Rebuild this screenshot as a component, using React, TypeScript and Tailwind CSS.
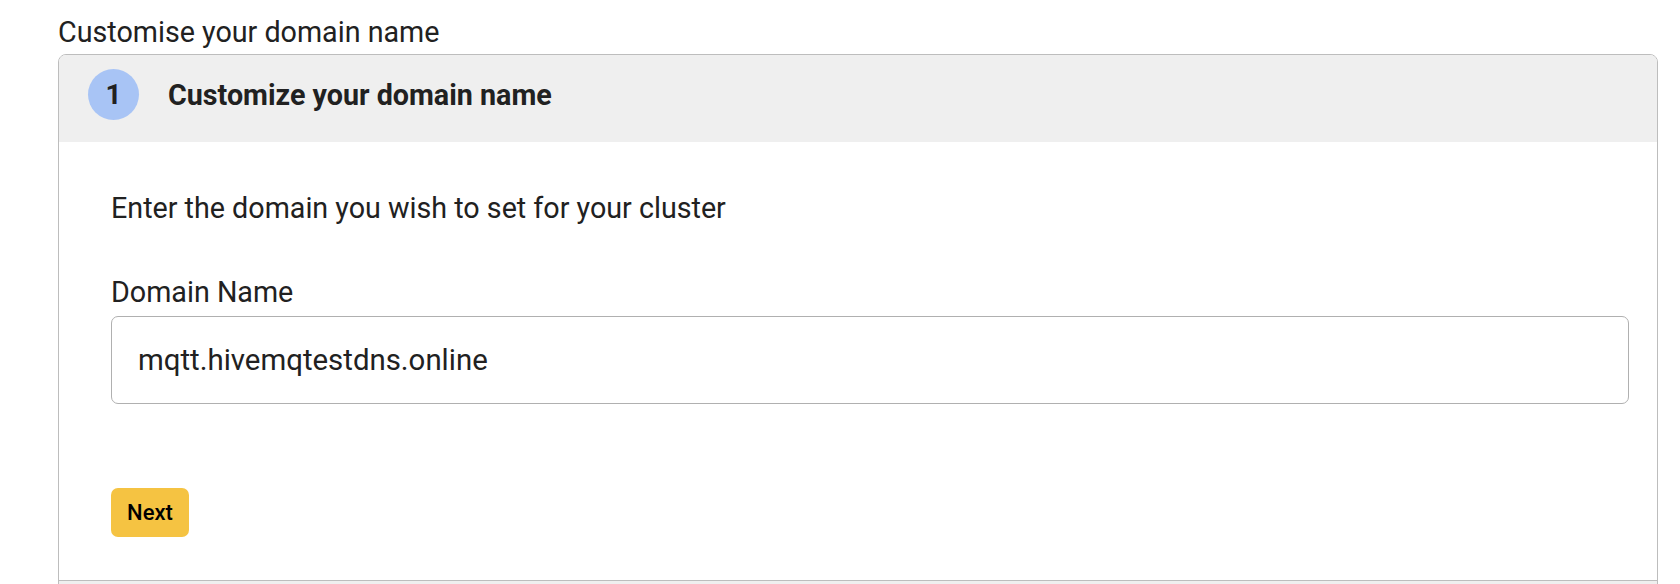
import { useState } from 'react';

export default function App() {
  const [domain, setDomain] = useState('mqtt.hivemqtestdns.online');

  return (
    <div className="min-h-screen bg-white font-['Roboto',sans-serif] text-[#212121]">
      <div className="ml-[58px] w-[1600px] pt-[15px]">
        {/* Page title */}
        <h2 className="mb-[5px] text-[28.7px] leading-[34px] font-normal">Customise your domain name</h2>

        {/* Stepper card */}
        <div className="overflow-hidden rounded-t-[8px] border border-[#bdbdbd]">
          {/* Step header */}
          <div className="flex items-center gap-[29px] bg-[#efefef] pt-[14px] pb-[22px] pl-[29px]">
            <div className="flex h-[51px] w-[51px] items-center justify-center rounded-full bg-[#a8c4f5] text-[28px] font-bold">
              1
            </div>
            <h3 className="text-[28.7px] leading-[34px] font-bold">Customize your domain name</h3>
          </div>

          {/* Step body */}
          <div className="pt-[49px] pr-[28px] pb-[43px] pl-[52px]">
            <p className="text-[28.7px] leading-[34px]">Enter the domain you wish to set for your cluster</p>

            <label htmlFor="domain" className="mt-[50px] block text-[28.7px] leading-[34px]">
              Domain Name
            </label>
            <input
              id="domain"
              type="text"
              value={domain}
              onChange={(e) => setDomain(e.target.value)}
              className="mt-[7px] block h-[88px] w-full rounded-[7px] border border-[#b0b0b0] px-[26px] text-[29.4px] text-[#212121] outline-none"
            />

            <button className="mt-[84px] h-[49px] w-[78px] rounded-[7px] bg-[#f5c342] text-[22px] font-medium text-black">
              Next
            </button>
          </div>

          {/* Next step (collapsed) */}
          <div className="h-[40px] border-t border-[#bdbdbd] bg-[#efefef]" />
        </div>
      </div>
    </div>
  );
}
